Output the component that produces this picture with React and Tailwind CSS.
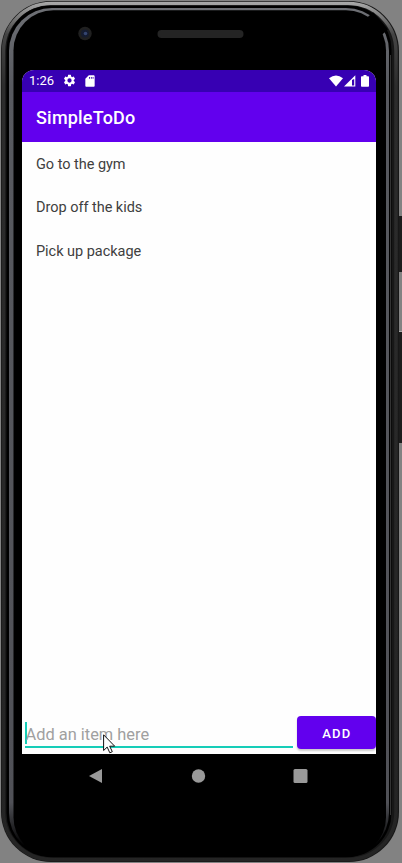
import React from "react";

function PhoneBody() {
  return (
    <svg className="absolute inset-0" width="402" height="863" viewBox="0 0 402 863" fill="none">
      <defs>
        <linearGradient id="rim" x1="0" y1="0" x2="0" y2="863" gradientUnits="userSpaceOnUse">
          <stop offset="0" stopColor="#b0b0b0" />
          <stop offset="0.012" stopColor="#909090" />
          <stop offset="0.04" stopColor="#444" />
          <stop offset="0.1" stopColor="#2c2c2c" />
          <stop offset="1" stopColor="#242424" />
        </linearGradient>
        <linearGradient id="glass" x1="0" y1="0" x2="0" y2="863" gradientUnits="userSpaceOnUse">
          <stop offset="0" stopColor="#707277" />
          <stop offset="0.1" stopColor="#585a60" />
          <stop offset="0.93" stopColor="#505157" />
          <stop offset="0.98" stopColor="#000" />
        </linearGradient>
      </defs>
      <rect x="399" y="216" width="4" height="56" fill="#1c1c1c" />
      <rect x="399" y="331" width="4" height="112" fill="#1c1c1c" />
      <path d="M399 331.5h3" stroke="#aaa" />
      <rect x="1" y="1" width="398" height="861" rx="50" fill="#171717" />
      <rect x="3.5" y="3.5" width="392.5" height="856" rx="47.500" stroke="url(#rim)" strokeWidth="3.500" />
      <rect x="6.500" y="5.500" width="385" height="851.500" rx="44" fill="#000" />
      <path d="M390.500 55v760" stroke="#333" />
      <rect x="9" y="8" width="380" height="848" rx="43" fill="url(#glass)" />
      <rect x="13.500" y="10.300" width="372.500" height="847" rx="40" fill="#000" />
      <path d="M370 15l15 17" stroke="#000" strokeWidth="8" />
      <circle cx="85" cy="33.5" r="6.7" fill="#202020" />
      <circle cx="85" cy="33.5" r="4" fill="#151c30" />
      <circle cx="85.500" cy="33.500" r="1.800" fill="#35456f" />
      <rect x="157.500" y="30" width="86" height="8" rx="4" fill="#242424" />
    </svg>
  );
}

function StatusBar() {
  return (
    <div className="flex h-[21.5px] shrink-0 items-center bg-[#3700b3] pl-[7px] pr-[7px] text-white">
      <span className="w-[34px] text-[13px] leading-none">1:26</span>
      <svg width="13" height="13" viewBox="1 1 22 22" fill="currentColor">
        <path d="M19.14 12.94c.04-.3.06-.61.06-.94 0-.32-.02-.64-.07-.94l2.03-1.58a.49.49 0 0 0 .12-.61l-1.92-3.32a.488.488 0 0 0-.59-.22l-2.39.96c-.5-.38-1.03-.7-1.62-.94l-.36-2.54a.484.484 0 0 0-.48-.41h-3.84c-.24 0-.43.17-.47.41l-.36 2.54c-.59.24-1.13.57-1.62.94l-2.39-.96c-.22-.08-.47 0-.59.22L2.74 8.87c-.12.21-.08.47.12.61l2.03 1.58c-.05.3-.09.63-.09.94s.02.64.07.94l-2.03 1.58a.49.49 0 0 0-.12.61l1.92 3.32c.12.22.37.29.59.22l2.39-.96c.5.38 1.03.7 1.62.94l.36 2.54c.05.24.24.41.48.41h3.84c.24 0 .44-.17.47-.41l.36-2.54c.59-.24 1.13-.56 1.62-.94l2.39.96c.22.08.47 0 .59-.22l1.92-3.32c.12-.22.07-.47-.12-.61l-2.01-1.58zM12 15.6A3.6 3.6 0 1 1 12 8.400a3.6 3.600 0 0 1 0 7.200z" />
      </svg>
      <svg className="ml-[7px]" width="14" height="14" viewBox="0 0 24 24" fill="currentColor">
        <path d="M18 2h-8L4.020 8 4 20c0 1.100.9 2 2 2h12c1.100 0 2-.9 2-2V4c0-1.100-.9-2-2-2zm-6 6h-1.500V5H12v3zm3 0h-1.500V5H15v3zm3 0h-1.500V5H18v3z" />
      </svg>
      <svg className="ml-auto" width="14" height="12" viewBox="0 0 14 12" fill="currentColor">
        <path d="M0 3.200Q7-2.400 14 3.200L7 11.500z" />
      </svg>
      <svg className="ml-px" width="12" height="12" viewBox="0 0 12 12">
        <path d="M0 11.500L11.300.300v11.200z" fill="#fff" />
        <path d="M8 5v5.500h2.200V4z" fill="#3700b3" />
      </svg>
      <svg className="ml-[5px]" width="8" height="12" viewBox="0 0 8 12" fill="currentColor">
        <path d="M2.500 0h3v1.200H7.200q.8 0 .8.8v9q0 .8-.8.8H.8Q0 11.800 0 11V2q0-.8.8-.8h1.700z" />
      </svg>
    </div>
  );
}

const tasks = ["Go to the gym", "Drop off the kids", "Pick up package"];

export default function App() {
  return (
    <div className="relative h-[863px] w-[402px] overflow-hidden bg-[#828282] font-[Roboto,sans-serif]">
      <PhoneBody />
      <div className="relative flex h-[863px] flex-col pl-[22px] pr-[26px] pt-[70px]">
        <div className="flex h-[684.4px] flex-col overflow-hidden rounded-t-[12px] bg-[#fefefe]">
          <StatusBar />
          <header className="flex h-[50px] shrink-0 items-center bg-[#6200ee] pl-[14px] pt-[2px] text-[18px] font-medium tracking-[0.2px] text-white">
            SimpleToDo
          </header>
          <ul className="grow pt-[1px]">
            {tasks.map((task) => (
              <li key={task} className="flex h-[43.4px] items-center pl-[14px] pt-[1px] text-[14.5px] tracking-[-0.03px] text-[#404040]">
                {task}
              </li>
            ))}
          </ul>
          <div className="flex h-[38px] shrink-0 items-start">
            <div className="ml-[3px] mr-[3.5px] mt-[4px] flex h-[27.5px] w-[268px] shrink-0 items-center border-b-2 border-[#16cdb8] text-[16.4px] text-[#a0a0a0]">
              <i className="h-[22px] w-[1.5px] bg-[#16cdb8]" />
              <span className="-ml-[1px] pt-[4px]">Add an item here</span>
            </div>
            <button className="h-[33px] min-w-0 grow rounded-[4px] bg-[#6200ee] pl-[1px] pt-[1px] text-[13px] font-medium tracking-[1.2px] text-white shadow-[0_2px_2px_rgba(0,0,0,0.2)]">
              ADD
            </button>
          </div>
        </div>
        <nav className="h-[44px] pl-[67px] pt-[14.6px]">
          <svg width="220" height="15" viewBox="0 0 220 15" fill="#999">
            <path d="M0 7L13 0v14z" />
            <circle cx="109.500" cy="7" r="6.700" />
            <rect x="204.500" y="0" width="14" height="14" rx="1.500" />
          </svg>
        </nav>
      </div>
      <svg className="absolute left-[103px] top-[734px]" width="13" height="20" viewBox="0 0 13 20">
        <path d="M.6.8v15.700l3.600-3.400 2.600 5.700 2.500-1.100-2.600-5.500h5z" fill="#fff" stroke="#111" strokeWidth="1" />
      </svg>
    </div>
  );
}
